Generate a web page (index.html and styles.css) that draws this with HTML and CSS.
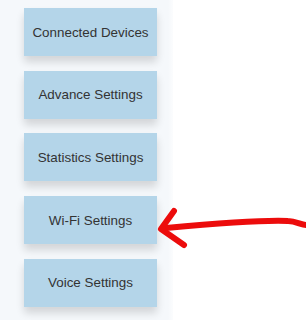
FILE: index.html
```html
<!DOCTYPE html>
<html lang="en">
<head>
    <meta charset="UTF-8">
    <meta name="viewport" content="width=device-width, initial-scale=1.0">
    <title>Settings Menu</title>
    <link rel="stylesheet" href="styles.css">
</head>
<body>
    <div class="sidebar">
        <button class="menu-btn">Connected Devices</button>
        <button class="menu-btn">Advance Settings</button>
        <button class="menu-btn">Statistics Settings</button>
        <button class="menu-btn">Wi-Fi Settings</button>
        <button class="menu-btn">Voice Settings</button>
    </div>

    <svg class="arrow" width="306" height="320" viewBox="0 0 306 320">
        <path d="M306 225 C301 225 296 221 288 221 C268 220 232 222 166 228" />
        <path d="M174 211 L161 229 L184 245" />
    </svg>
</body>
</html>
```

FILE: styles.css
```css
body {
    margin: 0;
    background: #fff;
    font-family: Arial, "Liberation Sans", sans-serif;
}
.sidebar {
    width: 173px;
    min-height: 320px;
    box-sizing: border-box;
    padding: 8px 0 0 24px;
    background: linear-gradient(to right, #f5f8fb 0, #f5f8fb 168px, #fff 176px);
    display: flex;
    flex-direction: column;
    gap: 14.7px;
}
.menu-btn {
    width: 133px;
    height: 48px;
    border: none;
    padding: 0;
    background: #b4d5e9;
    color: #333;
    font-family: Arial, "Liberation Sans", sans-serif;
    font-size: 13.4px;
    box-shadow: 0 6px 8px rgba(0, 0, 0, 0.14);
    cursor: pointer;
}
.arrow {
    position: absolute;
    left: 0;
    top: 0;
    fill: none;
    stroke: #ec0c0c;
    stroke-width: 6;
    stroke-linecap: round;
    stroke-linejoin: round;
}
```
